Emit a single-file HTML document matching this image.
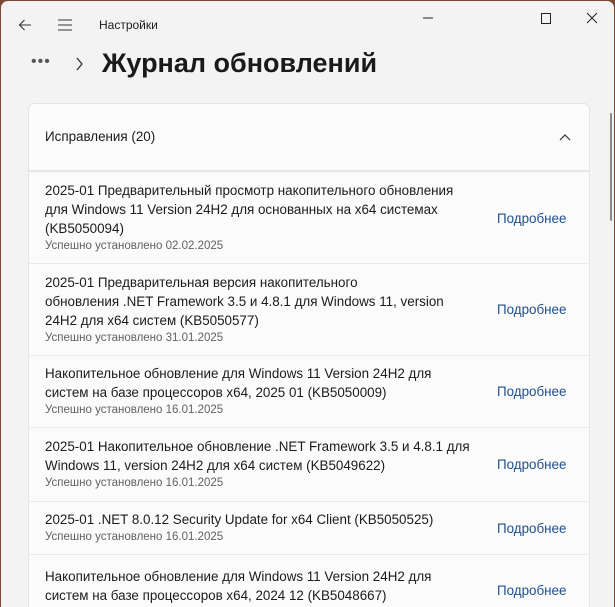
<!DOCTYPE html>
<html><head><meta charset="utf-8"><style>
*{margin:0;padding:0;box-sizing:border-box}
body{width:615px;height:607px;background:#7a4a35;font-family:"Segoe UI","Liberation Sans","Noto Sans CJK SC",sans-serif;overflow:hidden;position:relative}
.win{position:absolute;left:1px;top:1px;width:613px;height:606px;background:#f3f3f3;border-radius:7px 7px 0 0;overflow:hidden}
.t{position:absolute;color:#1b1b1b}
.panel{position:absolute;left:27px;top:102px;width:562px;height:520px;background:#f9f9f9;border:1px solid #e5e5e5;border-radius:6px}
.hdr{position:absolute;left:0;top:0;width:560px;height:68px;background:#fbfbfb;border-radius:6px 6px 0 0;border-bottom:2px solid #e6e6e6}
.row{position:absolute;left:0;width:560px;background:#fbfbfb;border-bottom:1px solid #ebebeb;display:flex;align-items:center;padding-left:16px}
.row .m{font-size:13.4px;line-height:19px;color:#1b1b1b;width:450px;white-space:nowrap}
.row .s{font-size:11.5px;line-height:17px;color:#616161}
.row .l{position:absolute;left:468px;font-size:13.4px;color:#1f4f8f}
</style></head><body><div class="win">
<svg class="t" style="left:16px;top:16px" width="16" height="16" viewBox="0 0 16 16"><path d="M14 8H2.5M7.5 3L2.5 8l5 5" fill="none" stroke="#333" stroke-width="1.1"/></svg>
<svg class="t" style="left:56px;top:17px" width="16" height="14" viewBox="0 0 16 14"><path d="M1 2h14M1 7h14M1 12h14" stroke="#333" stroke-width="1.1"/></svg>
<div class="t" style="left:98px;top:17px;font-size:12px">Настройки</div>
<svg class="t" style="left:413px;top:11px" width="190" height="16" viewBox="0 0 190 16"><path d="M9 6h10" stroke="#222" stroke-width="1"/><path d="M127.5 1.5h9v10h-9z" fill="none" stroke="#222" stroke-width="1"/><path d="M173 1l10 10M183 1l-10 10" stroke="#222" stroke-width="1"/></svg>
<div class="t" style="left:30px;top:52px;font-size:16px;letter-spacing:1px;color:#555">•••</div>
<svg class="t" style="left:74px;top:56px" width="10" height="14" viewBox="0 0 10 14"><path d="M2 1l5 6-5 6" fill="none" stroke="#444" stroke-width="1.4"/></svg>
<div class="t" style="left:101px;top:47px;font-size:27px;font-weight:600;color:#1a1a1a">Журнал обновлений</div>
<div class="panel">
<div class="hdr"><div class="t" style="left:16px;top:25px;font-size:13.4px">Исправления (20)</div>
<svg class="t" style="left:530px;top:29px" width="12" height="8" viewBox="0 0 12 8"><path d="M1 7l5-5 5 5" fill="none" stroke="#333" stroke-width="1.2"/></svg></div>
<div class="row" style="top:69px;height:91px"><div><div class="m">2025-01 Предварительный просмотр накопительного обновления<br>для Windows 11 Version 24H2 для основанных на x64 системах<br>(KB5050094)</div><div class="s">Успешно установлено 02.02.2025</div></div><div class="l">Подробнее</div></div>
<div class="row" style="top:160px;height:92px"><div><div class="m">2025-01 Предварительная версия накопительного<br>обновления .NET Framework 3.5 и 4.8.1 для Windows 11, version<br>24H2 для x64 систем (KB5050577)</div><div class="s">Успешно установлено 31.01.2025</div></div><div class="l">Подробнее</div></div>
<div class="row" style="top:252px;height:72px"><div><div class="m">Накопительное обновление для Windows 11 Version 24H2 для<br>систем на базе процессоров x64, 2025 01 (KB5050009)</div><div class="s">Успешно установлено 16.01.2025</div></div><div class="l">Подробнее</div></div>
<div class="row" style="top:324px;height:74px"><div><div class="m">2025-01 Накопительное обновление .NET Framework 3.5 и 4.8.1 для<br>Windows 11, version 24H2 для x64 систем (KB5049622)</div><div class="s">Успешно установлено 16.01.2025</div></div><div class="l">Подробнее</div></div>
<div class="row" style="top:398px;height:53px"><div><div class="m">2025-01 .NET 8.0.12 Security Update for x64 Client (KB5050525)</div><div class="s">Успешно установлено 16.01.2025</div></div><div class="l">Подробнее</div></div>
<div class="row" style="top:451px;height:74px;align-items:flex-start;padding-top:12px"><div><div class="m">Накопительное обновление для Windows 11 Version 24H2 для<br>систем на базе процессоров x64, 2024 12 (KB5048667)</div><div class="s">Успешно установлено 12.12.2024</div></div><div class="l" style="top:28px">Подробнее</div></div>
</div>
<div style="position:absolute;left:609px;top:112px;width:2px;height:108px;background:#8a8a8a;border-radius:1px"></div>
</div></body></html>
